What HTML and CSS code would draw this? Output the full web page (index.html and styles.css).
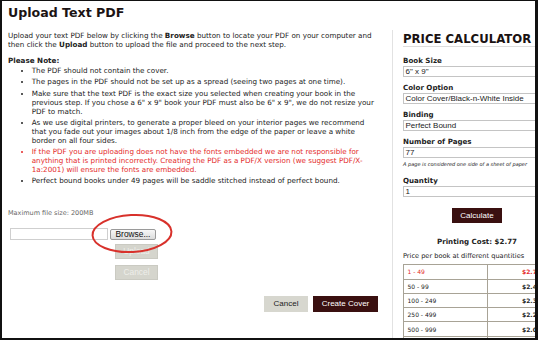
FILE: index.html
```html
<!DOCTYPE html>
<html lang="en">
<head>
<meta charset="utf-8">
<title>Upload Text PDF</title>
<link rel="stylesheet" href="styles.css">
</head>
<body>
<div class="frame">
  <div class="main">
    <h1 class="title">Upload Text PDF</h1>
    <p class="intro">Upload your text PDF below by clicking the <b>Browse</b> button to locate your PDF on your computer and then click the <b>Upload</b> button to upload the file and proceed to the next step.</p>
    <div class="note-head">Please Note:</div>
    <ul class="notes">
      <li>The PDF should not contain the cover.</li>
      <li>The pages in the PDF should not be set up as a spread (seeing two pages at one time).</li>
      <li>Make sure that the text PDF is the exact size you selected when creating your book in the previous step. If you chose a 6" x 9" book your PDF must also be 6" x 9", we do not resize your PDF to match.</li>
      <li>As we use digital printers, to generate a proper bleed on your interior pages we recommend that you fade out your images about 1/8 inch from the edge of the paper or leave a white border on all four sides.</li>
      <li class="warn">If the PDF you are uploading does not have the fonts embedded we are not responsible for anything that is printed incorrectly. Creating the PDF as a PDF/X version (we suggest PDF/X-1a:2001) will ensure the fonts are embedded.</li>
      <li>Perfect bound books under 49 pages will be saddle stitched instead of perfect bound.</li>
    </ul>
    <div class="maxsize">Maximum file size: 200MB</div>
    <div class="file-row"><span class="file-box"></span><span class="btn browse">Browse...</span></div>
    <div class="upload-actions"><span class="btn disabled">Upload</span><span class="btn disabled">Cancel</span></div>
    <div class="form-actions"><span class="btn grey">Cancel</span><span class="btn dark create">Create Cover</span></div>
  </div>
  <div class="calc">
    <h2 class="calc-title">PRICE CALCULATOR</h2>
    <div class="field field-first"><label>Book Size</label><div class="box">6" x 9"</div></div>
    <div class="field"><label>Color Option</label><div class="box">Color Cover/Black-n-White Inside</div></div>
    <div class="field"><label>Binding</label><div class="box">Perfect Bound</div></div>
    <div class="field"><label>Number of Pages</label><div class="box">77</div></div>
    <p class="hint">A page is considered one side of a sheet of paper</p>
    <div class="field field-qty"><label>Quantity</label><div class="box">1</div></div>
    <div class="calc-action"><span class="btn dark calc-btn">Calculate</span></div>
    <div class="cost">Printing Cost: $2.77</div>
    <div class="per-book">Price per book at different quantities</div>
    <table class="prices">
      <tr class="current"><td class="qty">1 - 49</td><td class="price">$2.77</td></tr>
      <tr><td class="qty">50 - 99</td><td class="price">$2.49</td></tr>
      <tr><td class="qty">100 - 249</td><td class="price">$2.38</td></tr>
      <tr><td class="qty">250 - 499</td><td class="price">$2.21</td></tr>
      <tr><td class="qty">500 - 999</td><td class="price">$2.05</td></tr>
      <tr><td class="qty">1000+</td><td class="price">$1.93</td></tr>
    </table>
  </div>
  <svg class="circle" viewBox="0 0 86 46" width="86" height="46" aria-hidden="true">
    <ellipse cx="42" cy="21.5" rx="39.5" ry="18.5" transform="rotate(-3 42 21.5)" fill="none" stroke="#d8312b" stroke-width="2"/>
  </svg>
</div>
</body>
</html>
```

FILE: styles.css
```css
* { box-sizing: border-box; }
html, body { margin: 0; padding: 0; background: #fff; }
body {
  width: 540px;
  height: 340px;
  overflow: hidden;
  font-family: "DejaVu Sans", Verdana, sans-serif;
  color: #222;
}
.frame {
  position: relative;
  display: flex;
  width: 538px;
  height: 340px;
  border-style: solid;
  border-color: #111;
  border-width: 1px 3px 2px 2px;
  overflow: hidden;
}
.main {
  flex: 0 0 390px;
  padding: 4px 14px 0 6px;
}
.title {
  margin: 0;
  font-size: 12.6px;
  line-height: 15px;
  font-weight: bold;
  color: #1c1414;
}
.intro {
  margin: 11.2px 0 0;
  font-size: 7.2px;
  line-height: 9px;
}
.note-head {
  margin-top: 7.3px;
  font-size: 7.2px;
  line-height: 9px;
  font-weight: bold;
}
.notes {
  margin: 0.5px 0 0;
  padding-left: 23.7px;
  font-size: 7.2px;
  line-height: 9px;
}
.notes li { margin-top: 2.3px; }
.notes li:first-child { margin-top: 0; }
.notes .warn { color: #e42a2a; }
.maxsize {
  margin-top: 23.5px;
  font-size: 6.5px;
  line-height: 9px;
  color: #666;
}
.file-row {
  display: flex;
  align-items: flex-start;
  gap: 2px;
  margin: 10px 0 0 2px;
}
.file-box {
  width: 98px;
  height: 12px;
  border: 1px solid #cfcfcf;
  background: #fff;
}
.btn {
  display: flex;
  align-items: center;
  justify-content: center;
  font-family: "Liberation Sans", Arial, sans-serif;
  font-size: 8px;
  white-space: nowrap;
}
.browse {
  width: 46px;
  height: 11px;
  margin-top: 1px;
  border: 1px solid #9a9a9a;
  border-radius: 2px;
  background: linear-gradient(#f7f7f7, #dcdcdc);
  color: #111;
  font-size: 8.4px;
}
.upload-actions {
  display: flex;
  flex-direction: column;
  align-items: flex-start;
  gap: 6px;
  margin: 4px 0 0 107px;
}
.disabled {
  width: 43px;
  height: 15px;
  background: #d5d5cd;
  border: 1px solid #cacac2;
  color: #eeeeea;
  font-size: 8.4px;
}
.form-actions {
  display: flex;
  justify-content: flex-end;
  gap: 5px;
  margin-top: 16px;
}
.grey {
  width: 44px;
  height: 16px;
  background: #d7d7cf;
  color: #222;
}
.dark { background: #3a1010; color: #fff; }
.create { width: 65px; height: 16px; }

.calc {
  flex: 0 0 159px;
  margin-top: 29px;
  border-left: 1px solid #e2e2e2;
  padding: 3px 0 0 10px;
}
.calc-title {
  margin: 0;
  font-size: 11.7px;
  line-height: 12.5px;
  font-weight: bold;
  color: #1a1212;
  border-bottom: 1px solid #ddd;
  white-space: nowrap;
}
.field { margin-top: 6px; }
.field-first { margin-top: 9.5px; }
.field-qty { margin-top: 8px; }
.field label {
  display: block;
  font-weight: bold;
  font-size: 7.1px;
  line-height: 9px;
}
.box {
  margin-top: 1px;
  height: 11px;
  border: 1px solid #c4c4c4;
  padding-left: 1.5px;
  font-family: "Liberation Sans", Arial, sans-serif;
  font-size: 8px;
  line-height: 9px;
  white-space: nowrap;
  overflow: hidden;
}
.hint {
  margin: 2.5px 0 0;
  font-size: 5px;
  line-height: 7px;
  font-style: italic;
  white-space: nowrap;
}
.calc-action {
  display: flex;
  justify-content: center;
  margin-top: 11.5px;
}
.calc-btn { width: 50px; height: 15px; }
.cost {
  margin-top: 14px;
  text-align: center;
  font-weight: bold;
  font-size: 7.1px;
  line-height: 9px;
}
.per-book {
  margin-top: 5.5px;
  font-size: 6.6px;
  line-height: 9px;
  white-space: nowrap;
}
.prices {
  margin-top: 3.8px;
  width: 100%;
  border-collapse: collapse;
  font-size: 6px;
}
.prices td {
  height: 14.3px;
  border: 1px solid #a8a396;
  padding: 0;
}
.prices .qty { width: 84px; padding-left: 3.5px; }
.prices .price { text-align: right; padding-right: 9px; font-weight: bold; }
.prices .current td { color: #e42a2a; }
.circle {
  position: absolute;
  left: 88px;
  top: 211px;
}
```
